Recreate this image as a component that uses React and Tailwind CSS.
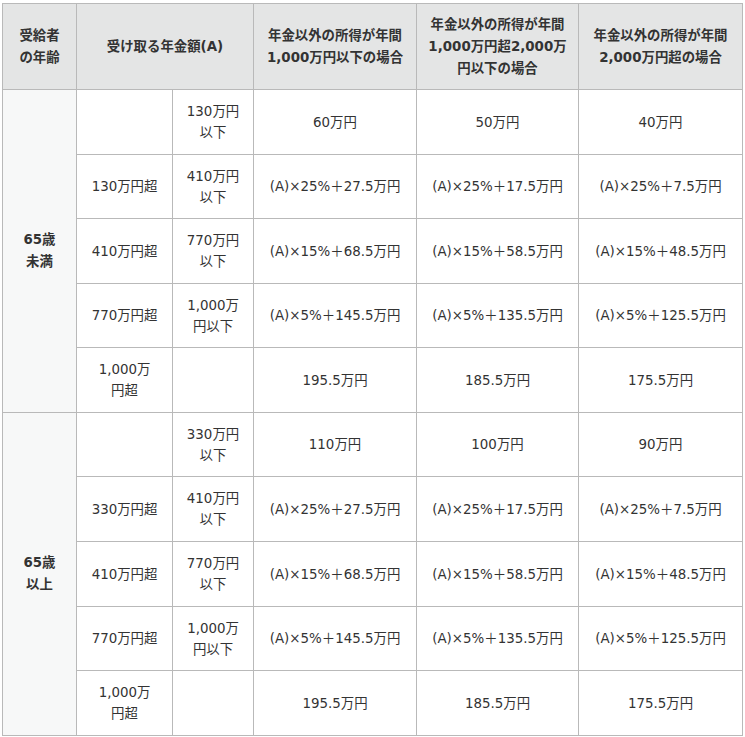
import React from 'react'

const rows65u = [
  { a: '', b: <>130万円<br />以下</>, v: ['60万円', '50万円', '40万円'] },
  { a: '130万円超', b: <>410万円<br />以下</>, v: ['(A)×25%＋27.5万円', '(A)×25%＋17.5万円', '(A)×25%＋7.5万円'] },
  { a: '410万円超', b: <>770万円<br />以下</>, v: ['(A)×15%＋68.5万円', '(A)×15%＋58.5万円', '(A)×15%＋48.5万円'] },
  { a: '770万円超', b: <>1,000万<br />円以下</>, v: ['(A)×5%＋145.5万円', '(A)×5%＋135.5万円', '(A)×5%＋125.5万円'] },
  { a: <>1,000万<br />円超</>, b: '', v: ['195.5万円', '185.5万円', '175.5万円'] },
]

const rows65o = [
  { a: '', b: <>330万円<br />以下</>, v: ['110万円', '100万円', '90万円'] },
  { a: '330万円超', b: <>410万円<br />以下</>, v: ['(A)×25%＋27.5万円', '(A)×25%＋17.5万円', '(A)×25%＋7.5万円'] },
  { a: '410万円超', b: <>770万円<br />以下</>, v: ['(A)×15%＋68.5万円', '(A)×15%＋58.5万円', '(A)×15%＋48.5万円'] },
  { a: '770万円超', b: <>1,000万<br />円以下</>, v: ['(A)×5%＋145.5万円', '(A)×5%＋135.5万円', '(A)×5%＋125.5万円'] },
  { a: <>1,000万<br />円超</>, b: '', v: ['195.5万円', '185.5万円', '175.5万円'] },
]

const heights = ['h-[65px]', 'h-[64px]', 'h-[65px]', 'h-[64px]', 'h-[65px]']
const heights2 = ['h-[64px]', 'h-[65px]', 'h-[65px]', 'h-[64px]', 'h-[65px]']

const td = 'border border-[#b9b9b9] text-center align-middle px-1 leading-[21px]'
const th = 'border border-[#b9b9b9] bg-[#e4e5e5] text-center align-middle font-bold px-1 leading-[22px]'

const Group = ({ label, rows, hs }) => (
  <>
    {rows.map((r, i) => (
      <tr key={i} className={hs[i]}>
        {i === 0 && (
          <td rowSpan={5} className={td + ' bg-[#f7f8f8] font-bold leading-[22px]'}>{label}</td>
        )}
        <td className={td}>{r.a}</td>
        <td className={td}>{r.b}</td>
        {r.v.map((v, j) => (
          <td key={j} className={td}>{v}</td>
        ))}
      </tr>
    ))}
  </>
)

export default function App() {
  return (
    <div className="bg-white pt-[3px] pl-[2px] w-[745px] h-[737px]">
      <table
        className="border-collapse table-fixed w-[740px] text-[13.4px] text-[#333]"
        style={{ fontFamily: '"DejaVu Sans", "Noto Sans CJK JP", sans-serif' }}
      >
        <colgroup>
          <col className="w-[74px]" />
          <col className="w-[96px]" />
          <col className="w-[81px]" />
          <col className="w-[163px]" />
          <col className="w-[162px]" />
          <col className="w-[164px]" />
        </colgroup>
        <thead>
          <tr className="h-[86px]">
            <th className={th}>受給者<br />の年齢</th>
            <th colSpan={2} className={th}>受け取る年金額(A)</th>
            <th className={th}>年金以外の所得が年間<br />1,000万円以下の場合</th>
            <th className={th}>年金以外の所得が年間<br />1,000万円超2,000万<br />円以下の場合</th>
            <th className={th}>年金以外の所得が年間<br />2,000万円超の場合</th>
          </tr>
        </thead>
        <tbody>
          <Group label={<>65歳<br />未満</>} rows={rows65u} hs={heights} />
          <Group label={<>65歳<br />以上</>} rows={rows65o} hs={heights2} />
        </tbody>
      </table>
    </div>
  )
}
